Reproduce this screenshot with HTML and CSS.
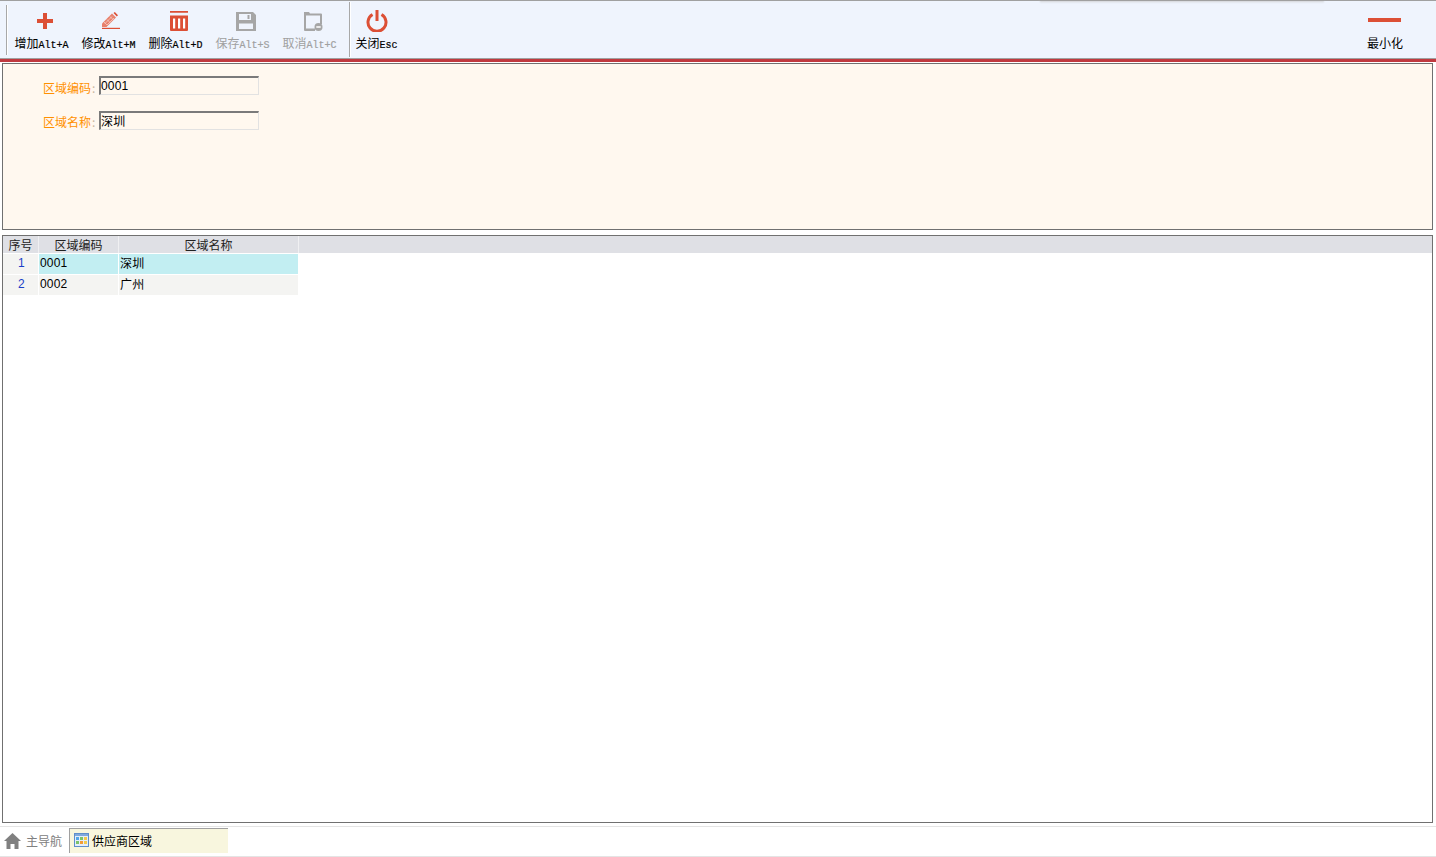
FILE: index.html
```html
<!DOCTYPE html>
<html lang="zh">
<head>
<meta charset="utf-8">
<title>供应商区域</title>
<link rel="stylesheet" href="styles.css">
</head>
<body>
<div class="app">
  <header class="toolbar">
    <div class="shadow"></div>
    <div class="grip"></div>
    <button class="tool t-add"><svg class="ico" viewBox="0 0 16 16"><path d="M6 0h4v6h6v4h-6v6H6v-6H0V6h6z" fill="#dc4f35"/></svg><span class="lbl">增加<i>Alt+A</i></span></button>
    <button class="tool t-edit"><svg class="ico" viewBox="0 0 18 17"><path d="M0 11.500 10 1.500l4 4-9.500 9.500H0z" fill="#e8806c"/><path d="M11.500 1 12.800 0l3.200 3.200-1.200 1.300z" fill="#dc4f35"/><path d="M0 15.800h18V17H0z" fill="#dc4f35"/><path d="M3 11.500l7-7M5 13l7-7M2 10l3 3M5 7.500l3 3M8 4.500l3 3" stroke="#f6d5ce" stroke-width=".7"/></svg><span class="lbl">修改<i>Alt+M</i></span></button>
    <button class="tool t-del"><svg class="ico" viewBox="0 0 18 20"><path d="M0 0h18v1.700H0zM0 4.500h18V19a1 1 0 0 1-1 1H1a1 1 0 0 1-1-1z" fill="#dc4f35"/><path d="M3 7.500h2.200V17.500H3zM8 7.500h2.200V17.500H8zM13 7.500h2.200V17.500H13z" fill="#fff"/></svg><span class="lbl">删除<i>Alt+D</i></span></button>
    <button class="tool off t-save"><svg class="ico" viewBox="0 0 20 19"><path d="M0 0h17l3 3v16H0z" fill="#a6a6a6"/><path d="M3 2h12v6H3z" fill="#eff4fd"/><path d="M11.500 3h2v4h-2z" fill="#a6a6a6"/><path d="M3 11.500h14V17H3z" fill="#eff4fd"/></svg><span class="lbl">保存<i>Alt+S</i></span></button>
    <button class="tool off t-cancel"><svg class="ico" viewBox="0 0 19 19"><path d="M0 0h5l1 1.500h11a1 1 0 0 1 1 1V12h-2V3.500H2v13h9V19H1a1 1 0 0 1-1-1z" fill="#a6a6a6"/><circle cx="14.500" cy="15" r="4" fill="#a6a6a6"/><path d="M12.300 14.300h4.400v1.400h-4.400z" fill="#fff"/></svg><span class="lbl">取消<i>Alt+C</i></span></button>
    <div class="sep"></div>
    <button class="tool t-close"><svg class="ico" viewBox="0 0 22 22"><path d="M6.500 4.500a9 9 0 1 0 9 0" fill="none" stroke="#dc4f35" stroke-width="3"/><path d="M9.500 0h3v11h-3z" fill="#dc4f35"/></svg><span class="lbl">关闭<i>Esc</i></span></button>
    <button class="tool t-min"><span class="dash"></span><span class="lbl">最小化</span></button>
  </header>
  <div class="redline"></div>

  <section class="form">
    <div class="row"><label>区域编码<b>:</b></label><input class="field" value="0001"></div>
    <div class="row row-low"><label>区域名称<b>:</b></label><input class="field" value="深圳"></div>
  </section>

  <section class="grid">
    <div class="ghead">
      <div class="c c1">序号</div>
      <div class="c c2">区域编码</div>
      <div class="c c3">区域名称</div>
    </div>
    <div class="grow sel">
      <div class="c c1 num">1</div>
      <div class="c c2 digits">0001</div>
      <div class="c c3">深圳</div>
    </div>
    <div class="grow">
      <div class="c c1 num">2</div>
      <div class="c c2 digits">0002</div>
      <div class="c c3">广州</div>
    </div>
  </section>

  <footer class="tabs">
    <div class="home"><svg class="homeico" viewBox="0 0 17 16"><path d="M8.500 0 17 8h-2.500v8H10.500v-5h-4v5H2.500V8H0z" fill="#808080"/></svg><span>主导航</span></div>
    <div class="tab"><svg class="tabico" viewBox="0 0 15 14"><rect x=".5" y=".5" width="14" height="13" fill="#e3eefb" stroke="#5f8ecb"/><path d="M1 1h13v2H1z" fill="#7fa8dc"/><path d="M2 4h3v3H2z" fill="#55a6e8"/><path d="M6 4h3v3H6z" fill="#7cc36a"/><path d="M10 4h3v3h-3z" fill="#f2c94c"/><path d="M2 8h3v3H2z" fill="#7cc36a"/><path d="M6 8h3v3H6z" fill="#f29b38"/><path d="M10 8h3v3h-3z" fill="#f2c94c"/></svg><span>供应商区域</span></div>
  </footer>
</div>
</body>
</html>
```

FILE: styles.css
```css
* { box-sizing: border-box; }
html, body { margin: 0; height: 100%; overflow: hidden; background: #fff; }
body { font: 12px "Noto Sans CJK SC", "Liberation Sans", sans-serif; color: #000; }
.app { width: 1436px; height: 857px; display: flex; flex-direction: column; }

.toolbar { position: relative; height: 59px; flex: none; display: flex; align-items: flex-start; padding-left: 6px; background: #eff4fd; border-top: 1px solid #a0a0a0; border-bottom: 1px solid #a0a0a0; }
.shadow { position: absolute; left: 1040px; top: -1px; width: 284px; height: 1px; background: #a0a0a0; box-shadow: 0 1px 2px #c4c4c4; }
.grip { width: 1px; height: 50px; margin-top: 4px; background: #a8a8a8; box-shadow: 1px 0 0 #fff; }
.tool { border: 0; padding: 0; margin: 0; background: none; font: inherit; color: #000; height: 57px; position: relative; display: block; flex: none; text-align: center; }
.ico { position: absolute; display: block; }
.lbl { position: absolute; left: 0; right: 0; top: 33px; line-height: 17px; white-space: nowrap; text-align: center; }
.lbl i { font: 10px/17px "Liberation Mono", monospace; -webkit-text-stroke: .2px currentColor; }
.off { color: #a0a0a0; }
.t-add { width: 67px; margin-left: 1px; }
.t-add .ico { left: 29px; top: 12px; width: 16px; height: 16px; }
.t-edit { width: 67px; }
.t-edit .ico { left: 27px; top: 11px; width: 18px; height: 17px; }
.t-del { width: 67px; }
.t-del .ico { left: 28px; top: 10px; width: 18px; height: 20px; }
.t-save { width: 67px; }
.t-save .ico { left: 27px; top: 11px; width: 20px; height: 19px; }
.t-cancel { width: 67px; }
.t-cancel .ico { left: 28px; top: 11px; width: 19px; height: 19px; }
.sep { width: 1px; height: 55px; margin-top: 1px; margin-left: 6px; background: #a8a8a8; box-shadow: 1px 0 0 #fff; }
.t-close { width: 53px; }
.t-close .ico { left: 16px; top: 9px; width: 22px; height: 22px; }
.t-min { width: 70px; margin-left: auto; margin-right: 16px; }
.dash { position: absolute; left: 18px; top: 17px; width: 33px; height: 4px; background: #dc4f35; }

.redline { height: 3px; flex: none; background: #c0393f; }

.form { height: 167px; flex: none; margin: 1px 3px 0 2px; background: #fff8ef; border: 1px solid #707070; padding-top: 12px; }
.row { display: flex; align-items: flex-start; height: 34px; padding-left: 40px; }
.row label { width: 56px; color: #ff9000; line-height: 23px; white-space: nowrap; }
.row label b { font-weight: 400; color: #c9b79f; margin-left: 1px; }
.field { width: 160px; height: 19px; padding: 0; background: #fff8ef; border: 1px solid #e2e2e2; border-top: 2px solid #7a7a7a; border-left: 2px solid #7a7a7a; font: 12px/15px "Liberation Sans", "Noto Sans CJK SC", sans-serif; letter-spacing: .2px; color: #000; outline: 0; }
.row-low .field { margin-top: 1px; padding-bottom: 2px; }

.grid { height: 588px; flex: none; margin: 5px 3px 0 2px; background: #fff; border: 1px solid #707070; }
.ghead { height: 18px; display: flex; background: #dfe0e5; border-bottom: 1px solid #fff; }
.ghead .c { line-height: 18px; text-align: center; color: #222; border-right: 1px solid #f0f0f2; }
.grow { height: 21px; display: flex; width: 296px; background: #f4f4f2; border-bottom: 1px solid #fff; }
.grow .c { line-height: 20px; padding-left: 1px; white-space: nowrap; border-right: 1px solid #fff; font-family: "Liberation Sans", "Noto Sans CJK SC", sans-serif; letter-spacing: .2px; }
.c1 { width: 36px; flex: none; }
.c2 { width: 80px; flex: none; }
.c3 { width: 180px; flex: none; }
.grow .digits, .grow .num { line-height: 18px; }
.grow .num { text-align: center; padding-left: 2px; color: #1a3fc8; }
.sel .c2, .sel .c3 { background: #c2eef2; }

.tabs { height: 31px; flex: none; margin-top: 3px; display: flex; align-items: flex-start; border-top: 1px solid #e4e4e4; border-bottom: 1px solid #e4e4e4; padding-top: 1px; }
.home { width: 69px; height: 25px; display: flex; align-items: center; padding-left: 4px; color: #808080; }
.homeico { width: 17px; height: 16px; margin-right: 5px; }
.tab { width: 159px; height: 25px; display: flex; align-items: center; padding: 0 0 2px 4px; background: #f8f6de; border-left: 1px solid #a0a0a0; border-top: 1px solid #a0a0a0; }
.tabico { width: 15px; height: 14px; margin-right: 3px; }
```
